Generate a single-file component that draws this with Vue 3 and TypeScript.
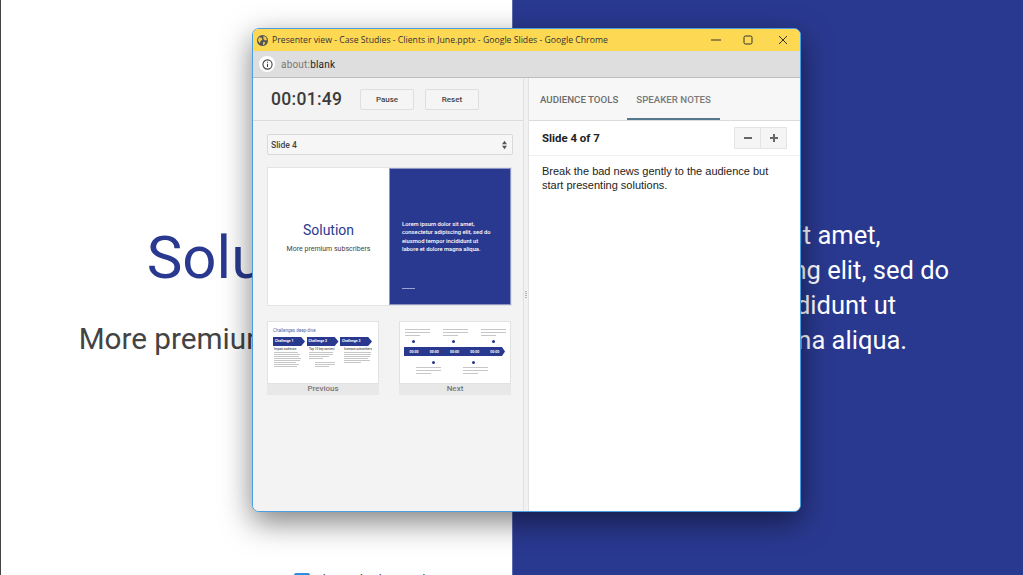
<template>
  <div class="desktop">
    <div class="half half-white">
      <h1 class="bg-title">Solution</h1>
      <p class="bg-sub">More premium subscribers</p>
    </div>
    <div class="half half-blue">
      <p class="bg-lorem">Lorem ipsum dolor sit amet, consectetur adipiscing elit, sed do eiusmod tempor incididunt ut labore et dolore magna aliqua.</p>
    </div>
    <div class="always"><span class="check"></span>Always display speaker notes</div>

    <div class="window">
      <div class="titlebar">
        <svg class="globe" viewBox="0 0 12 12" width="11" height="11">
          <circle cx="6" cy="6" r="6" fill="#555"/>
          <path d="M2 2.500l3 .5 1 2-2 1.500L3 9 1 6zM7 1l3 1.500.8 3-2.300.5L7 4zM6.500 8l2.500-.5-1 3-1.500.5z" fill="#f1c84a"/>
        </svg>
        <span class="title-text">Presenter view - Case Studies - Clients in June.pptx - Google Slides - Google Chrome</span>
        <div class="win-controls">
          <svg class="min-icon" viewBox="0 0 10 10" width="10" height="10"><path d="M0 5h10" stroke="#333" fill="none"/></svg>
          <svg viewBox="0 0 10 10" width="10" height="10"><rect x="1" y="1" width="8" height="8" rx="1.500" stroke="#333" fill="none"/></svg>
          <svg viewBox="0 0 10 10" width="10" height="10"><path d="M1 1l8 8M9 1l-8 8" stroke="#333" fill="none"/></svg>
        </div>
      </div>
      <div class="addressbar">
        <span class="info-chip">
          <svg viewBox="0 0 12 12" width="11" height="11">
            <circle cx="6" cy="6" r="5" stroke="#444" stroke-width="1.200" fill="none"/>
            <path d="M6 5.200v3.600M6 3v1.200" stroke="#444" stroke-width="1.200"/>
          </svg>
        </span>
        <span class="url"><span class="url-dim">about:</span>blank</span>
      </div>

      <div class="panes">
        <section class="left">
          <div class="timer-row">
            <span class="timer">00:01:49</span>
            <button class="btn">Pause</button>
            <button class="btn">Reset</button>
          </div>
          <div class="left-body">
            <div class="select">
              <span>Slide 4</span>
              <svg viewBox="0 0 8 12" width="7" height="10"><path d="M4 1l3 4H1zM4 11L1 7h6z" fill="#555"/></svg>
            </div>
            <div class="current">
              <div class="cur-left">
                <div class="cur-title">Solution</div>
                <div class="cur-sub">More premium subscribers</div>
              </div>
              <div class="cur-right">
                <p>Lorem ipsum dolor sit amet, consectetur adipiscing elit, sed do eiusmod tempor incididunt ut labore et dolore magna aliqua.</p>
                <span class="cur-line"></span>
              </div>
            </div>
            <div class="thumbs">
              <div class="thumb">
                <div class="thumb-slide prev-slide">
                  <div class="prev-title">Challenges deep-dive</div>
                  <div class="chevrons">
                    <span v-for="n in 3" :key="n" class="chev">Challenge {{ n }}</span>
                  </div>
                  <div class="prev-cols">
                    <div v-for="(col, i) in prevCols" :key="i" class="prev-col">
                      <b>{{ col.head }}</b>
                      <span v-for="(w, j) in col.lines" :key="j" class="mini-line" :style="{ width: w + 'px' }"></span>
                      <div v-if="col.bullets" class="bullet-block">
                        <span v-for="(w, j) in col.bullets" :key="j" class="mini-line" :style="{ width: w + 'px' }"></span>
                      </div>
                    </div>
                  </div>
                </div>
                <div class="thumb-label">Previous</div>
              </div>
              <div class="thumb">
                <div class="thumb-slide next-slide">
                  <div class="tl-row tl-top">
                    <div v-for="n in 3" :key="n" class="tl-item">
                      <span class="mini-line" style="width: 25px"></span>
                      <span class="mini-line" style="width: 25px"></span>
                      <span class="mini-line" style="width: 15px"></span>
                    </div>
                  </div>
                  <div class="tl-dots tl-dots-top"><i></i><i></i><i></i></div>
                  <div class="tl-bar">
                    <span v-for="n in 5" :key="n">00:00</span>
                  </div>
                  <div class="tl-dots tl-dots-bottom"><i></i><i></i></div>
                  <div class="tl-row tl-bottom">
                    <div v-for="n in 2" :key="n" class="tl-item">
                      <span class="mini-line" style="width: 25px"></span>
                      <span class="mini-line" style="width: 25px"></span>
                      <span class="mini-line" style="width: 15px"></span>
                    </div>
                  </div>
                </div>
                <div class="thumb-label">Next</div>
              </div>
            </div>
          </div>
        </section>

        <div class="divider"><span class="grip"></span></div>

        <section class="right">
          <div class="tabs">
            <span class="tab">AUDIENCE TOOLS</span>
            <span class="tab active">SPEAKER NOTES</span>
          </div>
          <div class="notes-head">
            <span class="slide-count">Slide 4 of 7</span>
            <div class="zoom-btns">
              <button>
                <svg viewBox="0 0 10 10" width="10" height="10"><path d="M1 5h8" stroke="#666" stroke-width="2"/></svg>
              </button>
              <button>
                <svg viewBox="0 0 10 10" width="10" height="10"><path d="M1 5h8M5 1v8" stroke="#666" stroke-width="2"/></svg>
              </button>
            </div>
          </div>
          <p class="notes">Break the bad news gently to the audience but start presenting solutions.</p>
        </section>
      </div>
    </div>
  </div>
</template>

<script setup lang="ts">
interface PrevCol {
  head: string
  lines: number[]
  bullets?: number[]
}

const prevCols: PrevCol[] = [
  { head: 'Impact audience', lines: [24, 26, 25, 27, 26, 22, 25, 23] },
  { head: 'Top 10 key content', lines: [24, 24, 20, 14], bullets: [20, 20, 14] },
  { head: 'Increase subscribers', lines: [27, 27, 26, 24, 26, 17] },
]
</script>

<style scoped>
.desktop {
  position: relative;
  display: flex;
  width: 1023px;
  height: 575px;
  overflow: hidden;
  font-family: Roboto, "Liberation Sans", sans-serif;
}

.half {
  width: 50%;
  height: 100%;
  box-sizing: border-box;
  display: flex;
  flex-direction: column;
  justify-content: center;
}

.half-white {
  background: #fff;
  border-left: 1px solid #444;
  align-items: center;
  padding-bottom: 1px;
}

.half-blue {
  background: #2a3990;
  border-left: 1px solid #5f6bb0;
  padding: 0 60px 0 51px;
}

.bg-title {
  margin: 4px 0 0;
  font-size: 60px;
  line-height: 70px;
  font-weight: 400;
  color: #2a3990;
}

.bg-sub {
  margin: 29px 0 0;
  font-size: 29.700px;
  line-height: 34px;
  color: #434343;
}

.bg-lorem {
  margin: 1px 0 0;
  font-size: 25.500px;
  line-height: 35.200px;
  color: #fff;
}

.always {
  position: absolute;
  left: 294px;
  top: 573px;
  display: flex;
  gap: 5px;
  font-size: 12px;
  line-height: 14px;
  color: #333;
}

.check {
  width: 16px;
  height: 14px;
  background: #2c8ee0;
  border-radius: 2px;
}

.window {
  position: absolute;
  left: 252px;
  top: 28px;
  width: 549px;
  height: 484px;
  box-sizing: border-box;
  display: flex;
  flex-direction: column;
  border: 1px solid #4b9fe0;
  border-radius: 7px;
  overflow: hidden;
  background: #f3f3f3;
  box-shadow: 0 10px 30px rgba(0, 0, 0, 0.5);
  font-family: Roboto, "Liberation Sans", sans-serif;
}

.titlebar {
  display: flex;
  align-items: center;
  height: 22px;
  flex-shrink: 0;
  padding-left: 4px;
  background: #fdd853;
  color: #333;
}

.globe {
  margin-right: 4px;
}

.title-text {
  font-family: "Open Sans", Roboto, sans-serif;
  font-size: 8.700px;
  white-space: nowrap;
}

.win-controls {
  margin-left: auto;
  display: flex;
  gap: 25px;
  padding-right: 12px;
}

.min-icon {
  margin-right: -3px;
}

.addressbar {
  display: flex;
  align-items: center;
  height: 27px;
  flex-shrink: 0;
  padding-left: 6px;
  background: #dedede;
  border-bottom: 1px solid #bdbdbd;
  box-sizing: border-box;
}

.info-chip {
  display: flex;
  align-items: center;
  justify-content: center;
  width: 16px;
  height: 16px;
  border-radius: 50%;
  background: #fff;
  margin-right: 6px;
}

.url {
  font-size: 10px;
  color: #222;
  letter-spacing: 0.200px;
}

.url-dim {
  color: #777;
}

.panes {
  flex: 1;
  display: flex;
  min-height: 0;
}

.left {
  width: 270px;
  flex-shrink: 0;
  background: #f3f3f3;
}

.timer-row {
  display: flex;
  align-items: center;
  height: 43px;
  box-sizing: border-box;
  padding-left: 18px;
  border-bottom: 1px solid #dcdcdc;
}

.timer {
  width: 89px;
  font-size: 17.500px;
  font-weight: 500;
  color: #3c3c3c;
  letter-spacing: 0.300px;
}

.btn {
  width: 54px;
  height: 21px;
  padding: 0;
  margin-right: 11px;
  border: 1px solid #dfdfdf;
  border-radius: 2px;
  background: #f5f5f5;
  font-family: inherit;
  font-size: 8px;
  font-weight: 500;
  color: #444;
}

.left-body {
  padding: 13px 10px 0 14px;
}

.select {
  display: flex;
  align-items: center;
  justify-content: space-between;
  height: 21px;
  box-sizing: border-box;
  padding: 0 4px 0 3px;
  border: 1px solid #d9d9d9;
  border-radius: 2px;
  background: #f6f6f6;
  font-size: 8.500px;
  font-weight: 500;
  color: #444;
}

.current {
  display: flex;
  width: 245px;
  height: 139px;
  margin-top: 12px;
  box-sizing: border-box;
  border: 1px solid #e4e4e4;
}

.cur-left {
  width: 121px;
  flex-shrink: 0;
  background: #fff;
  text-align: center;
  padding-top: 54px;
  box-sizing: border-box;
}

.cur-title {
  font-size: 14px;
  line-height: 16px;
  color: #2a3990;
}

.cur-sub {
  margin-top: 7px;
  font-size: 7px;
  line-height: 9px;
  color: #434343;
}

.cur-right {
  flex: 1;
  display: flex;
  flex-direction: column;
  justify-content: space-between;
  box-sizing: border-box;
  padding: 51px 15px 15px 12px;
  background: #2a3990;
  border: 1px solid #8c95c4;
}

.cur-right p {
  margin: 0;
  font-size: 5.800px;
  line-height: 8.300px;
  font-weight: 500;
  color: #fff;
}

.cur-line {
  width: 13px;
  height: 1px;
  background: #9aa2d0;
}

.thumbs {
  display: flex;
  gap: 20px;
  margin-top: 15px;
}

.thumb {
  width: 112px;
  background: #e8e8e8;
}

.thumb-slide {
  height: 63px;
  box-sizing: border-box;
  background: #fff;
  border: 1px solid #e2e2e2;
  overflow: hidden;
}

.thumb-label {
  height: 11px;
  line-height: 10px;
  text-align: center;
  font-size: 8px;
  font-weight: 500;
  color: #777;
}

.prev-slide {
  padding: 6px 4px 0 5px;
}

.prev-title {
  font-size: 4.500px;
  line-height: 6px;
  color: #5a66a8;
}

.chevrons {
  display: flex;
  gap: 1.500px;
  margin-top: 3px;
}

.chev {
  width: 32px;
  height: 9px;
  padding-left: 2px;
  box-sizing: border-box;
  background: #2a3990;
  color: #fff;
  font-size: 3.500px;
  line-height: 9px;
  font-weight: 700;
  clip-path: polygon(0 0, 88% 0, 100% 50%, 88% 100%, 0 100%);
}

.prev-cols {
  display: flex;
  gap: 7px;
  margin-top: 2px;
  padding-left: 1px;
}

.prev-col {
  display: flex;
  flex-direction: column;
  gap: 1px;
  width: 28px;
}

.prev-col b {
  font-size: 3px;
  line-height: 3px;
  font-weight: 500;
  color: #555;
  white-space: nowrap;
}

.bullet-block {
  display: flex;
  flex-direction: column;
  gap: 1px;
  margin-top: 2px;
  padding-left: 6px;
}

.mini-line {
  display: block;
  height: 1px;
  background: #c6c6c6;
}

.next-slide {
  display: flex;
  flex-direction: column;
}

.tl-row {
  display: flex;
}

.tl-top {
  gap: 13px;
  padding: 7px 0 0 5px;
}

.tl-bottom {
  gap: 22px;
  padding: 1px 0 0 16px;
}

.tl-item {
  display: flex;
  flex-direction: column;
  gap: 2px;
  width: 25px;
}

.tl-dots {
  display: flex;
  height: 8px;
  align-items: center;
}

.tl-dots i {
  width: 3px;
  height: 3px;
  border-radius: 50%;
  background: #2a3990;
}

.tl-dots-top {
  gap: 37px;
  padding-left: 12px;
  margin-top: 1px;
}

.tl-dots-bottom {
  gap: 37px;
  padding-left: 32px;
  margin-top: 2px;
}

.tl-bar {
  display: flex;
  justify-content: space-around;
  align-items: center;
  height: 9px;
  margin: 2px 5px 0 4px;
  background: #2a3990;
  color: #fff;
  font-size: 3.500px;
  font-weight: 700;
  clip-path: polygon(0 0, 97% 0, 100% 50%, 97% 100%, 0 100%);
}

.divider {
  position: relative;
  width: 6px;
  flex-shrink: 0;
  background: #f1f1f1;
  border-left: 1px solid #e2e2e2;
  border-right: 1px solid #e2e2e2;
  box-sizing: border-box;
}

.grip {
  position: absolute;
  left: 1px;
  top: 213px;
  width: 2px;
  height: 7px;
  background: repeating-linear-gradient(#b5b5b5 0 1px, transparent 1px 2px);
}

.right {
  flex: 1;
  min-width: 0;
  background: #fff;
}

.tabs {
  display: flex;
  height: 43px;
  box-sizing: border-box;
  background: #f7f7f7;
  border-bottom: 1px solid #dcdcdc;
  padding-left: 2px;
}

.tab {
  display: flex;
  align-items: center;
  height: 42px;
  box-sizing: border-box;
  padding: 0 9px;
  font-size: 9.700px;
  font-weight: 500;
  color: #6b6b6b;
}

.tab.active {
  border-bottom: 2px solid #56788f;
  color: #7a7a7a;
  padding-top: 2px;
}

.notes-head {
  display: flex;
  align-items: center;
  justify-content: space-between;
  height: 35px;
  box-sizing: border-box;
  padding: 0 13px 0 13px;
  border-bottom: 1px solid #efefef;
}

.slide-count {
  font-size: 11.400px;
  font-weight: 700;
  color: #222;
}

.zoom-btns {
  display: flex;
}

.zoom-btns button {
  display: flex;
  align-items: center;
  justify-content: center;
  width: 27px;
  height: 22px;
  padding: 0;
  background: #f5f5f5;
  border: 1px solid #e4e4e4;
}

.zoom-btns button + button {
  margin-left: -1px;
}

.notes {
  margin: 9px 0 0 13px;
  width: 235px;
  font-family: "Liberation Sans", Arial, sans-serif;
  font-size: 11px;
  line-height: 13.500px;
  color: #222;
}
</style>

<style>
html,
body {
  margin: 0;
  overflow: hidden;
}
</style>
